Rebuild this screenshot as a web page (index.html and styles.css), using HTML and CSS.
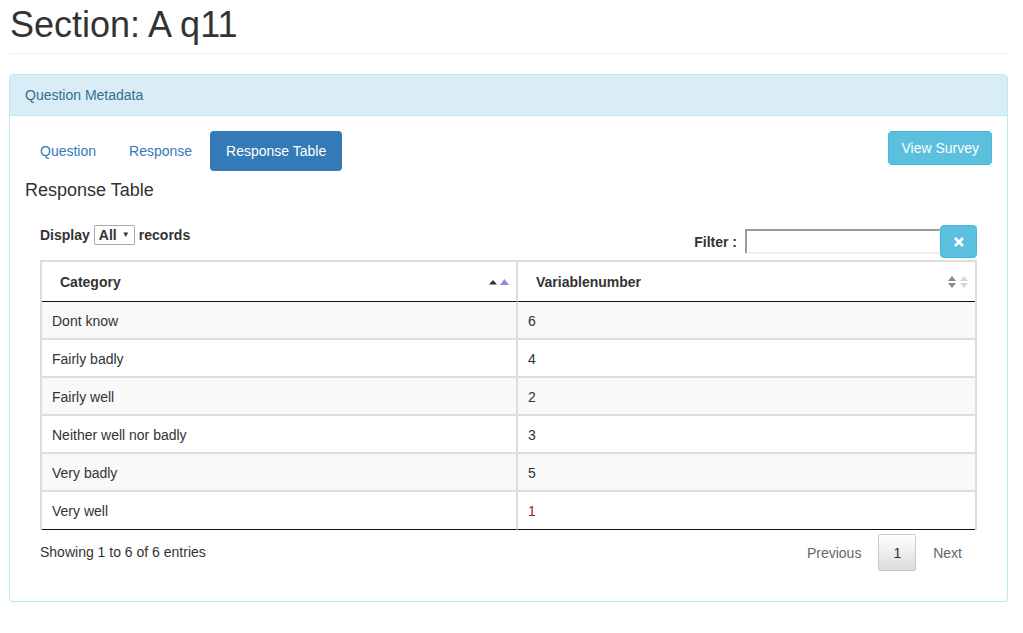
FILE: index.html
```html
<!DOCTYPE html>
<html>
<head>
<meta charset="utf-8">
<title>Section: A q11</title>
<link rel="stylesheet" href="styles.css">
</head>
<body>
<div class="container">
  <h1 class="page-header">Section: A q11</h1>
  <div class="panel">
    <div class="panel-heading">Question Metadata</div>
    <div class="panel-body">
      <div class="tab-row">
        <ul class="pills">
          <li><a href="#">Question</a></li>
          <li><a href="#">Response</a></li>
          <li class="active"><a href="#">Response Table</a></li>
        </ul>
        <a class="btn-info" href="#">View Survey</a>
      </div>
      <h4 class="section-title">Response Table</h4>
      <div class="dt-wrapper">
        <div class="dt-top">
          <div class="dt-length">Display <span class="select">All <span class="caret">▼</span></span> records</div>
          <div class="dt-filter">
            <span class="filter-label">Filter :</span>
            <span class="filter-input"></span>
            <span class="clear-btn"><svg width="12" height="12" viewBox="0 0 12 12"><path d="M2 2 L10 10 M10 2 L2 10" stroke="#fff" stroke-width="2.8" stroke-linecap="butt"/></svg></span>
          </div>
        </div>
        <table class="dt">
          <thead>
            <tr>
              <th class="c1"><div class="th-inner"><span>Category</span>
                <svg class="sort" width="24" height="8" viewBox="0 0 24 8"><path d="M1 6.5 L5 2 L9 6.5 Z" fill="#333"/><path d="M12 7 L16.5 1 L21 7 Z" fill="#8c8ce0"/></svg></div></th>
              <th class="c2"><div class="th-inner"><span>Variablenumber</span>
                <svg class="sort" width="24" height="14" viewBox="0 0 24 14"><path d="M1 6 L5 1 L9 6 Z M1 8 L5 13 L9 8 Z" fill="#8a8a8a"/><path d="M13 6 L17 1 L21 6 Z M13 8 L17 13 L21 8 Z" fill="#d6d6d6"/></svg></div></th>
            </tr>
          </thead>
          <tbody>
            <tr class="odd"><td class="c1">Dont know</td><td class="c2">6</td></tr>
            <tr><td class="c1">Fairly badly</td><td class="c2">4</td></tr>
            <tr class="odd"><td class="c1">Fairly well</td><td class="c2">2</td></tr>
            <tr><td class="c1">Neither well nor badly</td><td class="c2">3</td></tr>
            <tr class="odd"><td class="c1">Very badly</td><td class="c2">5</td></tr>
            <tr class="last"><td class="c1">Very well</td><td class="c2 red">1</td></tr>
          </tbody>
        </table>
        <div class="dt-bottom">
          <div class="dt-info">Showing 1 to 6 of 6 entries</div>
          <div class="dt-paginate">
            <a class="pg" href="#">Previous</a>
            <a class="pg current" href="#">1</a>
            <a class="pg" href="#">Next</a>
          </div>
        </div>
      </div>
    </div>
  </div>
</div>
</body>
</html>
```

FILE: styles.css
```css
* { box-sizing: border-box; }
html, body { margin: 0; padding: 0; background: #fff; }
body {
  font-family: "Liberation Sans", Arial, sans-serif;
  font-size: 14px;
  line-height: 20px;
  color: #333;
}
a { text-decoration: none; }
.container { padding: 0 15px 0 9px; }

.page-header {
  margin: 5px 0 20px 1px;
  padding-bottom: 8px;
  font-size: 36px;
  font-weight: normal;
  line-height: 40px;
  border-bottom: 1px solid #eee;
  color: #333;
}

.panel {
  border: 1px solid #bce8f1;
  border-radius: 4px;
  background: #fff;
  box-shadow: 0 1px 1px rgba(0,0,0,0.05);
}
.panel-heading {
  background: #d9edf7;
  color: #31708f;
  padding: 10px 15px;
  border-bottom: 1px solid #bce8f1;
  border-radius: 3px 3px 0 0;
}
.panel-body { padding: 15px 15px 30px; }

.tab-row { display: flex; justify-content: space-between; align-items: flex-start; }
.pills { list-style: none; margin: 0; padding: 0; display: flex; gap: 3px; }
.pills a {
  display: block;
  padding: 10px 15px;
  color: #337ab7;
  border-radius: 4px;
}
.pills .active a { background: #337ab7; color: #fff; padding: 10px 16px; }
.btn-info {
  display: block;
  padding: 6px 12px;
  background: #5bc0de;
  border: 1px solid #46b8da;
  border-radius: 4px;
  color: #fff;
  line-height: 20px;
}

.section-title {
  margin: 9px 0 0;
  font-size: 18px;
  font-weight: normal;
  line-height: 20px;
}

.dt-wrapper { margin: 0 15px; }
.dt-top {
  display: flex;
  justify-content: space-between;
  align-items: flex-start;
  margin-top: 25px;
  margin-bottom: 2px;
  font-weight: bold;
}
.dt-length { display: flex; align-items: center; gap: 4px; line-height: 20px; }
.select {
  display: inline-flex;
  align-items: center;
  height: 20px;
  width: 41px;
  padding: 0 4px 0 4px;
  border: 1px solid #aaa;
  border-radius: 1px;
  font-size: 14px;
  gap: 5px;
}
.caret { font-size: 8px; font-weight: normal; color: #333; }
.dt-filter { display: flex; align-items: center; }
.filter-label { margin-right: 8px; }
.filter-input {
  display: block;
  width: 195px;
  height: 25px;
  border-top: 2px solid #999;
  border-left: 2px solid #999;
  border-bottom: 2px solid #eee;
  border-right: 1px solid #eee;
  background: #fff;
}
.clear-btn {
  display: flex;
  align-items: center;
  justify-content: center;
  width: 37px;
  height: 33px;
  background: #5bc0de;
  border: 1px solid #46b8da;
  border-radius: 4px;
}

.dt {
  width: 100%;
  border-collapse: separate;
  border-spacing: 0;
  border-left: 2px solid #ddd;
  border-right: 2px solid #ddd;
}
.dt th {
  text-align: left;
  font-weight: bold;
  height: 42px;
  padding: 0 4px 0 18px;
  border-top: 2px solid #ddd;
  border-bottom: 1px solid #111;
}
.dt th.c1 { width: 476px; padding-right: 4px; }
.dt .c1 { border-right: 2px solid #ddd; }
.th-inner { display: flex; justify-content: space-between; align-items: center; }
.dt td {
  height: 38px;
  padding: 1px 10px 0;
  border-bottom: 2px solid #ddd;
}
.dt tr.odd td { background: #f9f9f9; }
.dt tr.last td { border-bottom: 1px solid #111; height: 38px; }
.red { color: #9a1c12; }

.dt-bottom {
  display: flex;
  justify-content: space-between;
  align-items: flex-start;
  margin-top: 4px;
}
.dt-info { padding-top: 8px; }
.dt-paginate { display: flex; gap: 2px; }
.pg {
  display: block;
  padding: 8px 14px 7px;
  border: 1px solid transparent;
  border-radius: 2px;
  color: #666;
}
.pg.current {
  color: #333;
  border: 1px solid #cacaca;
  background: linear-gradient(to bottom, #fff 0%, #dcdcdc 100%);
}
```
